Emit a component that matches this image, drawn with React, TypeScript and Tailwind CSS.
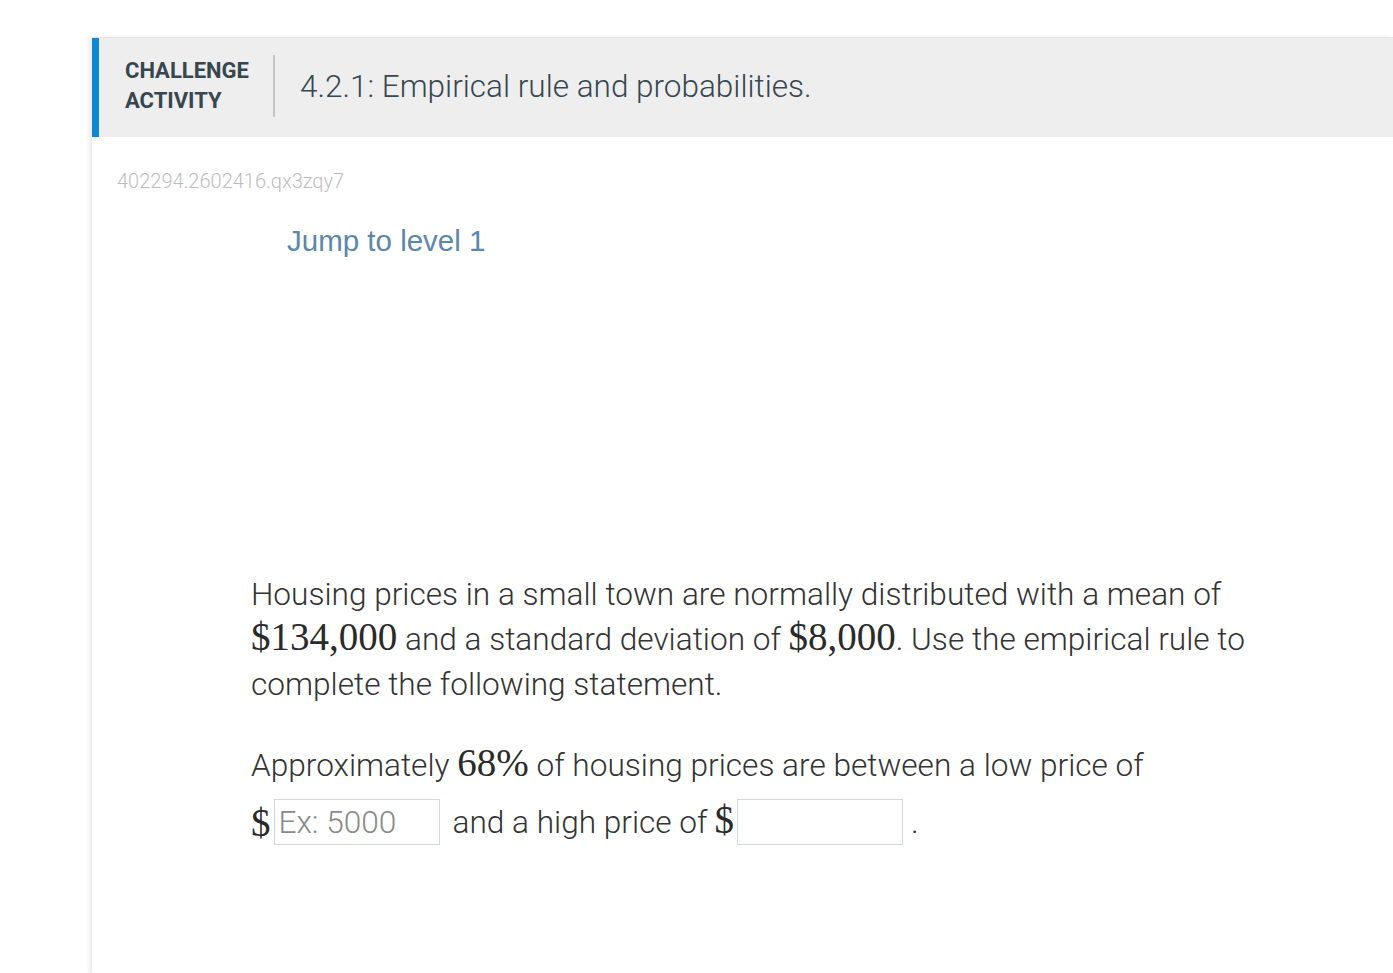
export default function App() {
  return (
    <div className="min-h-[973px] bg-white pl-[92px] pt-[37px] font-['Roboto',sans-serif]">
      <div className="min-h-[936px] border-t border-[#e4e4e4] bg-white shadow-[-3px_0_4px_rgba(0,0,0,0.08)]">
        {/* header */}
        <div className="flex h-[99px] items-center border-l-[7px] border-[#0b87d3] bg-[#eeeeee]">
          <div className="-mt-[3px] pl-[26px] text-[22px] font-bold leading-[30px] text-[#37474f]">
            CHALLENGE
            <br />
            ACTIVITY
          </div>
          <div className="-mt-[4px] ml-[24px] h-[62px] w-[2px] bg-[#c4c4c4]" />
          <h1 className="-mt-[2px] ml-[25px] text-[31.5px] font-light text-[#37474f]">
            4.2.1: Empirical rule and probabilities.
          </h1>
        </div>

        <div className="pl-[25px] pt-[31px]">
          <div className="text-[20px] font-light leading-[27px] text-[#bdbdbd]">
            402294.2602416.qx3zqy7
          </div>
          <div className="ml-[170px] mt-[26px] font-['Liberation_Sans',sans-serif] text-[29.5px] leading-[40px] text-[#5b86ad]">
            Jump to level 1
          </div>
        </div>

        <div className="pl-[159px] pt-[311px] pr-[120px] text-[31.6px] font-light leading-[45px] text-[#333333]">
          <p className="max-w-[1010px]">
            Housing prices in a small town are normally distributed with a mean of{" "}
            <Math>$134,000</Math> and a standard deviation of <Math>$8,000</Math>. Use the
            empirical rule to complete the following statement.
          </p>
          <p className="mt-[36px] max-w-[1010px]">
            Approximately <Math>68%</Math> of housing prices are between a low price of
          </p>
          <div className="mt-[11px] flex items-center">
            <Math>$</Math>
            <input
              placeholder="Ex: 5000"
              className="ml-[3px] h-[46px] w-[166px] border border-[#cfd8dc] px-[4px] text-[31.6px] font-light text-[#333] outline-none placeholder:text-[#8a8a8a]"
            />
            <span className="ml-[13px]">and a high price of</span>
            <span className="ml-[7px]">
              <Math>$</Math>
            </span>
            <input className="ml-[3px] h-[46px] w-[166px] border border-[#cfd8dc] px-[4px] text-[31.6px] font-light outline-none" />
            <span className="ml-[8px]">.</span>
          </div>
        </div>
      </div>
    </div>
  );
}

function Math({ children }: { children: React.ReactNode }) {
  return (
    <span className="font-['Liberation_Serif',serif] text-[39px] font-normal leading-none text-[#2a2a2a]">
      {children}
    </span>
  );
}
